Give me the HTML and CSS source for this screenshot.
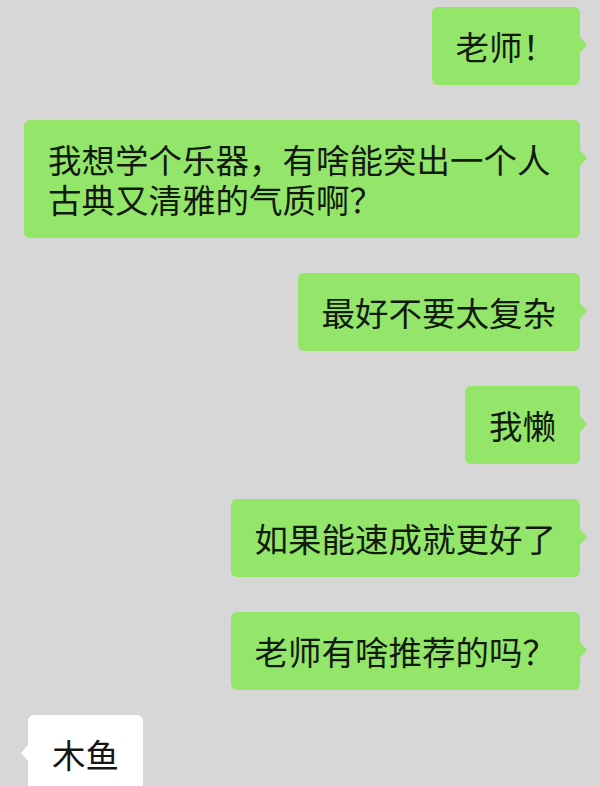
FILE: index.html
```html
<!DOCTYPE html>
<html lang="zh-CN">
<head>
  <meta charset="UTF-8" />
  <meta name="viewport" content="width=device-width, initial-scale=1.0"/>
  <title>聊天记录</title>
  <link rel="stylesheet" href="styles.css">
</head>
<body>

<div class="chat">
  <div class="row out"><div class="bubble">老师！</div></div>
  <div class="row out"><div class="bubble">我想学个乐器，有啥能突出一个人古典又清雅的气质啊？</div></div>
  <div class="row out"><div class="bubble">最好不要太复杂</div></div>
  <div class="row out"><div class="bubble">我懒</div></div>
  <div class="row out"><div class="bubble">如果能速成就更好了</div></div>
  <div class="row out"><div class="bubble">老师有啥推荐的吗？</div></div>
  <div class="row in"><div class="bubble">木鱼</div></div>
</div>

</body>
</html>
```

FILE: styles.css
```css
body {
  margin: 0;
  background: #d7d7d7;
  font-family: "Noto Sans CJK SC", "Noto Sans", sans-serif;
  height: 786px;
  overflow: hidden;
}
.chat {
  display: flex;
  flex-direction: column;
  gap: 35px;
  padding: 7px 20px 0 20px;
}
.row {
  display: flex;
}
.row.out {
  justify-content: flex-end;
}
.row.in {
  justify-content: flex-start;
  margin-top: -10px;
  padding-left: 8px;
}
.bubble {
  position: relative;
  box-sizing: border-box;
  max-width: 556px;
  padding: 19px 24px;
  border-radius: 6px;
  font-size: 33.5px;
  line-height: 40px;
  color: #121a0e;
}
.out .bubble {
  background: #93e66a;
}
.in .bubble {
  background: #ffffff;
  color: #151515;
}
.bubble::after {
  content: "";
  position: absolute;
  top: 30px;
  border-top: 8px solid transparent;
  border-bottom: 8px solid transparent;
}
.out .bubble::after {
  right: -7px;
  border-left: 7px solid #93e66a;
}
.in .bubble::after {
  left: -7px;
  border-right: 7px solid #ffffff;
}
```
